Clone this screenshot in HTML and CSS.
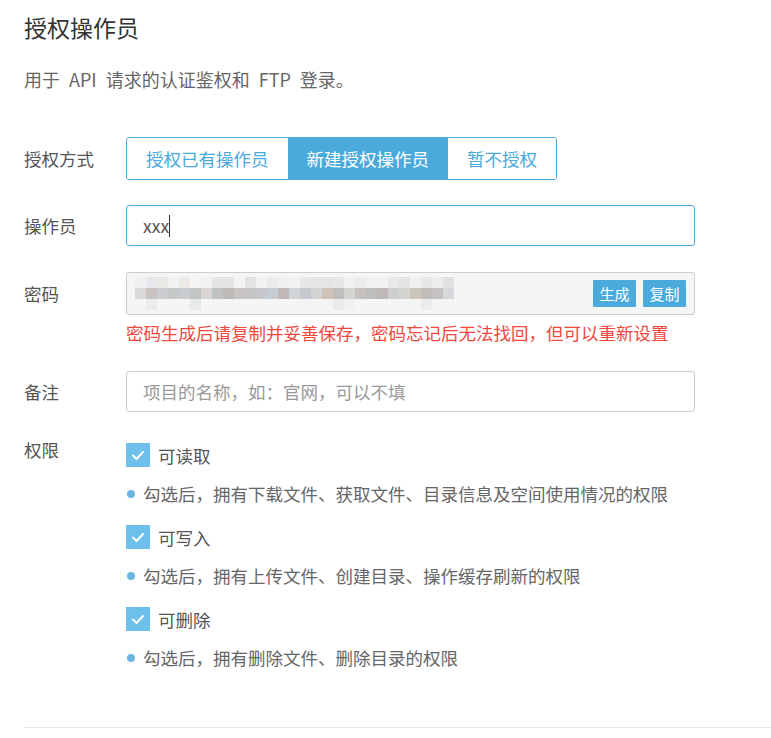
FILE: index.html
```html
<!DOCTYPE html>
<html lang="zh-CN">
<head>
  <meta charset="UTF-8">
  <title>授权操作员</title>
  <link rel="stylesheet" href="styles.css">
</head>
<body>
  <div class="page">
    <h1 class="title">授权操作员</h1>
    <p class="intro">用于 API 请求的认证鉴权和 FTP 登录。</p>

    <div class="form">
      <div class="row row-mode">
        <div class="label">授权方式</div>
        <div class="seg">
          <span class="seg-btn">授权已有操作员</span>
          <span class="seg-btn active">新建授权操作员</span>
          <span class="seg-btn">暂不授权</span>
        </div>
      </div>

      <div class="row row-operator">
        <div class="label">操作员</div>
        <div class="input focus">xxx<span class="caret"></span></div>
      </div>

      <div class="row row-password">
        <div class="label">密码</div>
        <div class="input readonly">
          <div class="mosaic"></div>
          <div class="pw-actions">
            <button class="mini-btn">生成</button>
            <button class="mini-btn">复制</button>
          </div>
        </div>
      </div>
      <div class="hint">密码生成后请复制并妥善保存，密码忘记后无法找回，但可以重新设置</div>

      <div class="row row-remark">
        <div class="label">备注</div>
        <input class="input" type="text" placeholder="项目的名称，如：官网，可以不填">
      </div>

      <div class="row row-perm">
        <div class="label">权限</div>
        <div class="perm-list">
          <div class="perm">
            <div class="check-line">
              <span class="checkbox"><svg viewBox="0 0 24 24"><polyline points="7,12.5 10.5,16 17,9"/></svg></span>
              <span>可读取</span>
            </div>
            <div class="perm-desc"><span class="dot"></span>勾选后，拥有下载文件、获取文件、目录信息及空间使用情况的权限</div>
          </div>
          <div class="perm">
            <div class="check-line">
              <span class="checkbox"><svg viewBox="0 0 24 24"><polyline points="7,12.5 10.5,16 17,9"/></svg></span>
              <span>可写入</span>
            </div>
            <div class="perm-desc"><span class="dot"></span>勾选后，拥有上传文件、创建目录、操作缓存刷新的权限</div>
          </div>
          <div class="perm">
            <div class="check-line">
              <span class="checkbox"><svg viewBox="0 0 24 24"><polyline points="7,12.5 10.5,16 17,9"/></svg></span>
              <span>可删除</span>
            </div>
            <div class="perm-desc"><span class="dot"></span>勾选后，拥有删除文件、删除目录的权限</div>
          </div>
        </div>
      </div>
    </div>

    <div class="divider"></div>
  </div>
</body>
</html>
```

FILE: styles.css
```css
body {
  margin: 0;
  background: #fff;
  color: #555;
  font-family: "Noto Sans CJK SC", "Microsoft YaHei", sans-serif;
  overflow: hidden;
}
.page {
  padding: 11px 0 0 24px;
}
.title {
  margin: 0;
  font-size: 23px;
  line-height: 32px;
  font-weight: 400;
  color: #333;
}
.intro {
  margin: 24px 0 0 0;
  font-size: 18px;
  line-height: 24px;
  word-spacing: 5px;
  color: #666;
}
.form {
  margin-top: 46px;
}
.row {
  display: flex;
  align-items: center;
}
.label {
  width: 102px;
  flex: none;
  font-size: 17.5px;
  color: #555;
}
.row-operator { margin-top: 25px; }
.row-password { margin-top: 26px; }
.row-remark { margin-top: 26px; }
.row-perm {
  margin-top: 26px;
  align-items: flex-start;
}
.row-perm .label {
  line-height: 24px;
}

/* segmented switch */
.seg {
  display: flex;
  height: 43px;
  box-sizing: border-box;
  border: 1px solid #4aaadc;
  border-radius: 3px;
  overflow: hidden;
}
.seg-btn {
  display: flex;
  align-items: center;
  padding: 0 19px;
  font-size: 17.5px;
  color: #4aaadc;
  background: #fff;
}
.seg-btn.active {
  background: #4aaadc;
  color: #fff;
}

/* inputs */
.input {
  width: 569px;
  height: 41px;
  box-sizing: border-box;
  border: 1px solid #ccc;
  border-radius: 3px;
  padding: 0 16px;
  font-family: inherit;
  font-size: 17.5px;
  color: #555;
  background: #fff;
  outline: none;
  display: flex;
  align-items: center;
}
.input::placeholder {
  color: #999;
}
.input.focus {
  border-color: #4aaadc;
}
.caret {
  display: inline-block;
  width: 1px;
  height: 22px;
  background: #333;
}
.input.readonly {
  height: 43px;
  padding: 0 8px 0 8px;
  background: #f5f5f5;
}
.mosaic {
  width: 319px;
  height: 33px;
  background-repeat: no-repeat;
  background-size: 319px 11px;
  background-position: 0 0, 0 11px, 0 22px;
  background-image:
    linear-gradient(90deg, #f0f0f0 0 11px, #e6e8eb 11px 22px, #eae9e6 22px 33px, #eff1f2 33px 44px, #ede9e3 44px 55px, #f4f4f4 55px 66px, #f1f1f1 66px 77px, #e5e4e2 77px 88px, #e4e4e3 88px 99px, #f3f3f3 99px 110px, #e3e3e3 110px 121px, #f1f1f1 121px 132px, #e9ebed 132px 143px, #efefef 143px 154px, #f3f3f3 154px 165px, #e7e7e7 165px 176px, #e6e6e6 176px 187px, #e5e5e5 187px 198px, #e7e7e7 198px 209px, #f1f1f1 209px 220px, #ececec 220px 231px, #f1f1f1 231px 242px, #f2f2f2 242px 253px, #e9e9e9 253px 264px, #e4e4e4 264px 275px, #efefef 275px 286px, #e7e7e7 286px 297px, #ebecee 297px 308px, #e1e1e1 308px 319px),
    linear-gradient(90deg, #d9d9d9 0 11px, #c9c4bf 11px 22px, #cbcccf 22px 33px, #c6c9c9 33px 44px, #c9cbd1 44px 55px, #c1c5c5 55px 66px, #d8d5d3 66px 77px, #c0c3c1 77px 88px, #bebab7 88px 99px, #c8c4c1 99px 110px, #c4c4c6 110px 121px, #c6c8cb 121px 132px, #c5cdd5 132px 143px, #c1b9b6 143px 154px, #d1d4d7 154px 165px, #c5c9cf 165px 176px, #d1d3d5 176px 187px, #cdc3b9 187px 198px, #c0bec1 198px 209px, #d3d6ce 209px 220px, #c7c1bd 220px 231px, #bdbdbd 231px 242px, #beb9b6 242px 253px, #cecece 253px 264px, #d4d3ce 264px 275px, #cbc5be 275px 286px, #c1bcb9 286px 297px, #c4c1c0 297px 308px, #d6d8db 308px 319px),
    linear-gradient(90deg, transparent 0 11px, #ebebeb 11px 22px, transparent 22px 55px, #e8e9e9 55px 66px, transparent 66px 198px, #ebebeb 198px 209px, #f1f1f1 209px 220px, transparent 220px 286px, #ececec 286px 297px, transparent 297px);
}
.pw-actions {
  margin-left: auto;
  display: flex;
  gap: 7px;
}
.mini-btn {
  width: 43px;
  height: 27px;
  padding: 0;
  border: none;
  border-radius: 1px;
  background: #4aaadc;
  color: #fff;
  font-family: inherit;
  font-size: 15px;
  line-height: 27px;
}
.hint {
  margin: 6px 0 0 102px;
  font-size: 17.5px;
  line-height: 24px;
  color: #f0483e;
}

/* permissions */
.perm-list {
  display: flex;
  flex-direction: column;
}
.perm {
  padding-bottom: 14px;
}
.check-line {
  display: flex;
  align-items: center;
  gap: 8px;
  height: 34px;
  font-size: 17.5px;
  color: #555;
}
.checkbox {
  width: 24px;
  height: 24px;
  background: #6cc0ea;
  display: flex;
}
.checkbox svg {
  width: 24px;
  height: 24px;
  fill: none;
  stroke: #fff;
  stroke-width: 2;
  stroke-linecap: round;
  stroke-linejoin: round;
}
.perm-desc {
  margin-top: 10px;
  display: flex;
  align-items: center;
  font-size: 17.5px;
  line-height: 24px;
  color: #666;
  white-space: nowrap;
}
.dot {
  width: 8px;
  height: 8px;
  border-radius: 50%;
  background: #6cb6e0;
  margin: 0 8px 0 1px;
}
.divider {
  margin-top: 43px;
  height: 1px;
  background: #e8e8e8;
}
```
